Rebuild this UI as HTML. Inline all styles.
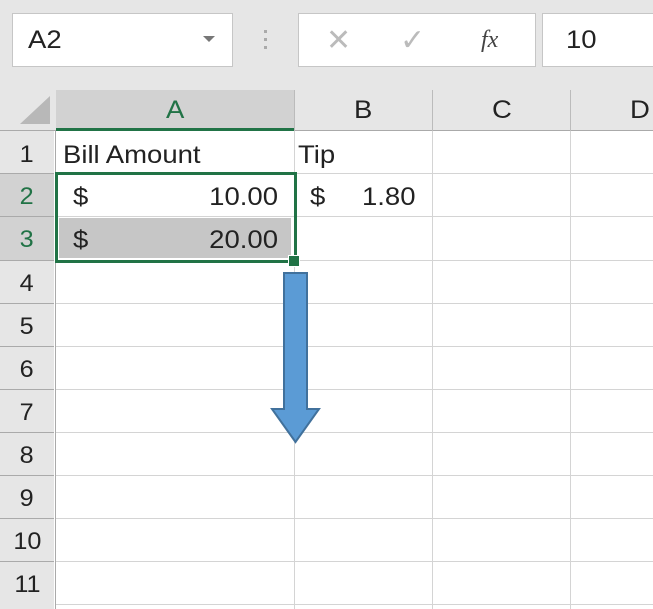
<!DOCTYPE html>
<html><head><style>
body{margin:0;width:653px;height:609px;overflow:hidden;background:#fff;font-family:"Liberation Sans",sans-serif;position:relative}
.a{position:absolute}
.t{position:absolute;font-size:25px;color:#222;line-height:1;transform:scaleX(1.1);transform-origin:left}
.r{transform-origin:right}
.rh{position:absolute;left:0;width:54px;text-align:center;font-size:24px;color:#222;background:#e6e6e6;border-bottom:1px solid #aaa}
.rh span{display:inline-block;transform:scaleX(1.05)}
.hl{position:absolute;height:1px;left:56px;width:600px;background:#d4d4d4}
.vl{position:absolute;width:1px;top:131px;height:478px;background:#d4d4d4}
</style></head><body>
<div class="a" style="left:0;top:0;width:653px;height:90px;background:#e6e6e6"></div>
<div class="a" style="left:12px;top:13px;width:219px;height:52px;background:#fff;border:1px solid #c6c6c6"></div>
<div class="t" style="left:28px;top:28px">A2</div>
<div class="a" style="left:203px;top:36px;width:0;height:0;border-left:6px solid transparent;border-right:6px solid transparent;border-top:6px solid #777"></div>
<div class="a" style="left:264px;top:30px;width:3px;height:3px;background:#aaa;box-shadow:0 8px #aaa,0 16px #aaa"></div>
<div class="a" style="left:298px;top:13px;width:236px;height:52px;background:#fff;border:1px solid #c6c6c6"></div>
<div class="t" style="left:326px;top:26px;font-size:30px;color:#bbb;transform:none">✕</div>
<div class="t" style="left:400px;top:26px;font-size:30px;color:#bbb;transform:none">✓</div>
<div class="t" style="left:481px;top:28px;font-size:24px;color:#444;font-family:'Liberation Serif',serif;font-style:italic;transform:none">fx</div>
<div class="a" style="left:542px;top:13px;width:120px;height:52px;background:#fff;border:1px solid #c6c6c6"></div>
<div class="t" style="left:566px;top:28px">10</div>
<!-- column headers -->
<div class="a" style="left:0;top:90px;width:653px;height:40px;background:#e6e6e6;border-bottom:1px solid #aaa"></div>
<div class="a" style="left:20px;top:96px;width:0;height:0;border-left:30px solid transparent;border-bottom:28px solid #b8b8b8"></div>
<div class="a" style="left:56px;top:90px;width:238px;height:38px;background:#d2d2d2;border-bottom:3px solid #217346"></div>
<div class="a" style="left:294px;top:90px;width:1px;height:41px;background:#bbb"></div>
<div class="a" style="left:432px;top:90px;width:1px;height:41px;background:#bbb"></div>
<div class="a" style="left:570px;top:90px;width:1px;height:41px;background:#bbb"></div>
<div class="t" style="left:166px;top:98px;color:#217346">A</div>
<div class="t" style="left:354px;top:98px">B</div>
<div class="t" style="left:492px;top:98px">C</div>
<div class="t" style="left:630px;top:98px">D</div>
<!-- row headers -->
<div class="a" style="left:55px;top:131px;width:1px;height:478px;background:#aaa"></div>
<div class="rh" style="top:131px;height:42px;line-height:48px"><span>1</span></div>
<div class="rh" style="top:174px;height:42px;line-height:46px;background:#d2d2d2;color:#217346"><span>2</span></div>
<div class="rh" style="top:217px;height:43px;line-height:46px;background:#d2d2d2;color:#217346"><span>3</span></div>
<div class="rh" style="top:261px;height:42px;line-height:46px"><span>4</span></div>
<div class="rh" style="top:304px;height:42px;line-height:46px"><span>5</span></div>
<div class="rh" style="top:347px;height:42px;line-height:46px"><span>6</span></div>
<div class="rh" style="top:390px;height:42px;line-height:46px"><span>7</span></div>
<div class="rh" style="top:433px;height:42px;line-height:46px"><span>8</span></div>
<div class="rh" style="top:476px;height:42px;line-height:46px"><span>9</span></div>
<div class="rh" style="top:519px;height:42px;line-height:46px"><span>10</span></div>
<div class="rh" style="top:562px;height:47px;line-height:46px;border:0"><span>11</span></div>
<!-- grid -->
<div class="hl" style="top:173px"></div><div class="hl" style="top:216px"></div><div class="hl" style="top:260px"></div>
<div class="hl" style="top:303px"></div><div class="hl" style="top:346px"></div><div class="hl" style="top:389px"></div>
<div class="hl" style="top:432px"></div><div class="hl" style="top:475px"></div><div class="hl" style="top:518px"></div>
<div class="hl" style="top:561px"></div><div class="hl" style="top:604px"></div>
<div class="vl" style="left:294px"></div><div class="vl" style="left:432px"></div><div class="vl" style="left:570px"></div>
<!-- cells -->
<div class="a" style="left:59px;top:218px;width:232px;height:40px;background:#c6c6c6"></div>
<div class="t" style="left:63px;top:143px">Bill Amount</div>
<div class="t" style="left:298px;top:143px">Tip</div>
<div class="t" style="left:73px;top:185px">$</div>
<div class="t r" style="left:180px;top:185px;width:98px;text-align:right">10.00</div>
<div class="t" style="left:310px;top:185px">$</div>
<div class="t" style="left:362px;top:185px">1.80</div>
<div class="t" style="left:73px;top:228px">$</div>
<div class="t r" style="left:180px;top:228px;width:98px;text-align:right">20.00</div>
<div class="a" style="left:55px;top:172px;width:236px;height:85px;border:3px solid #217346"></div>
<div class="a" style="left:288px;top:255px;width:10px;height:10px;background:#217346;border:1px solid #fff"></div>
<!-- arrow -->
<svg class="a" style="left:268px;top:270px" width="54" height="176"><path d="M16 3H39V139H51L27.5 172L4 139H16Z" fill="#5b9bd5" stroke="#41719c" stroke-width="2"/></svg>
</body></html>
